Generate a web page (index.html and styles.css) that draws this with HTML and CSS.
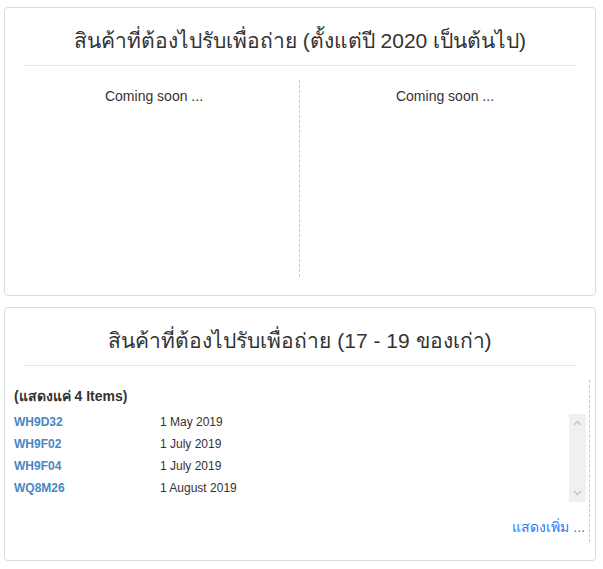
FILE: index.html
```html
<!DOCTYPE html>
<html lang="th">
<head>
<meta charset="utf-8">
<title>Pickup</title>
<link rel="stylesheet" href="styles.css">
</head>
<body>
<div class="page">
  <section class="panel">
    <h3 class="panel-title">สินค้าที่ต้องไปรับเพื่อถ่าย (ตั้งแต่ปี 2020 เป็นต้นไป)</h3>
    <hr class="divider">
    <div class="cols">
      <div class="col col-left"><p class="soon">Coming soon ...</p></div>
      <div class="col"><p class="soon">Coming soon ...</p></div>
    </div>
  </section>

  <section class="panel">
    <h3 class="panel-title">สินค้าที่ต้องไปรับเพื่อถ่าย (17 - 19 ของเก่า)</h3>
    <hr class="divider">
    <div class="old-list">
      <div class="count">(แสดงแค่ 4 Items)</div>
      <div class="scroll-box">
        <ul class="items">
          <li class="item"><a class="code" href="#">WH9D32</a><span class="date">1 May 2019</span></li>
          <li class="item"><a class="code" href="#">WH9F02</a><span class="date">1 July 2019</span></li>
          <li class="item"><a class="code" href="#">WH9F04</a><span class="date">1 July 2019</span></li>
          <li class="item"><a class="code" href="#">WQ8M26</a><span class="date">1 August 2019</span></li>
        </ul>
        <div class="scrollbar">
          <svg class="arrow" width="9" height="6" viewBox="0 0 9 6"><path d="M1 5 L4.5 1.5 L8 5" fill="none" stroke="#c3c3c3" stroke-width="1.4"/></svg>
          <svg class="arrow" width="9" height="6" viewBox="0 0 9 6"><path d="M1 1 L4.5 4.5 L8 1" fill="none" stroke="#c3c3c3" stroke-width="1.4"/></svg>
        </div>
      </div>
      <div class="more-row"><a class="more" href="#">แสดงเพิ่ม ...</a></div>
    </div>
  </section>
</div>
</body>
</html>
```

FILE: styles.css
```css
* { box-sizing: border-box; }

html, body {
  margin: 0;
  padding: 0;
  background: #fff;
}

body {
  font-family: "Liberation Sans", Arial, "Noto Sans", sans-serif;
  font-size: 14px;
  color: #333;
}

.page {
  padding: 7px 7px 0 4px;
  display: flex;
  flex-direction: column;
  gap: 11px;
}

.panel {
  border: 1px solid #dcdcdc;
  border-radius: 4px;
  padding: 0 18px 18px;
}

.panel-title {
  margin: 21px 0 13px;
  font-size: 21px;
  line-height: 23px;
  font-weight: normal;
  text-align: center;
  color: #333;
}

.divider {
  margin: 0 0 14px;
  border: 0;
  border-top: 1px solid #e5e5e5;
  height: 0;
}

.cols {
  display: flex;
  height: 197px;
  margin: 0 -13px 0 -14px;
}

.col {
  flex: 1 1 0;
  text-align: center;
}

.col-left {
  border-right: 1px dashed #c8c8c8;
}

.soon {
  margin: 0;
  padding-top: 6px;
  line-height: 20px;
  font-size: 14px;
  color: #333;
}

.old-list {
  margin: 0 -13px;
  padding: 8px 3px 7px 4px;
  border-right: 1px dashed #c8c8c8;
}

.count {
  font-size: 14px;
  font-weight: bold;
  line-height: 16px;
  color: #333;
}

.scroll-box {
  margin-top: 10px;
  display: flex;
  height: 88px;
}

.items {
  list-style: none;
  margin: 0;
  padding: 0;
  flex: 1 1 auto;
}

.item {
  display: flex;
  height: 22px;
  line-height: 16px;
  font-size: 12px;
}

.code {
  width: 146px;
  font-weight: bold;
  color: #4a86c5;
  text-decoration: none;
}

.date {
  color: #333;
}

.scrollbar {
  width: 17px;
  background: #f0f0f0;
  display: flex;
  flex-direction: column;
  justify-content: space-between;
  align-items: center;
  padding: 6px 0 6px;
}

.arrow { display: block; }

.more-row {
  margin-top: 17px;
  text-align: right;
  line-height: 16px;
  padding-right: 1px;
}

.more {
  font-size: 14px;
  color: #1e7bff;
  text-decoration: none;
}
```
